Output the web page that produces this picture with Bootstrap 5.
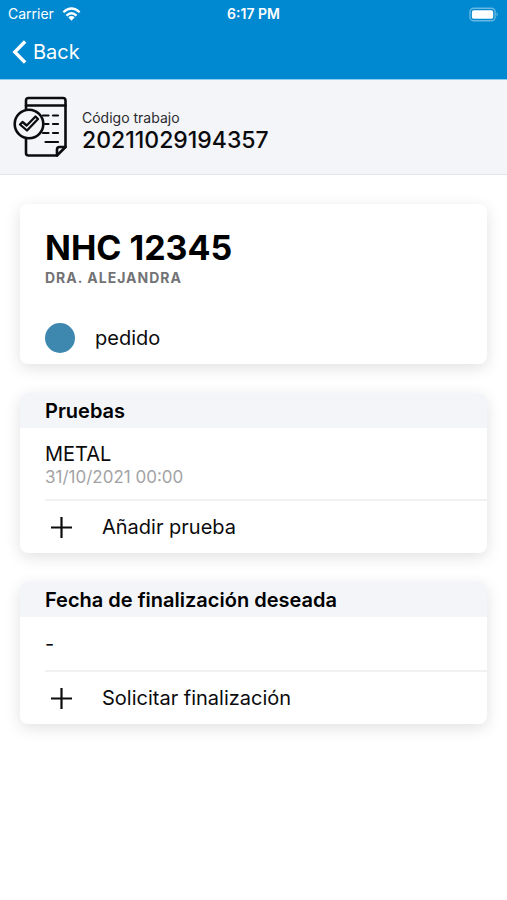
<!DOCTYPE html>
<html lang="es">
<head>
<meta charset="utf-8">
<meta name="viewport" content="width=device-width, initial-scale=1">
<title>Código trabajo 20211029194357</title>
<link href="https://cdn.jsdelivr.net/npm/bootstrap@5.3.0/dist/css/bootstrap.min.css" rel="stylesheet">
<style>
  body { font-family: Inter, "Liberation Sans", sans-serif; font-size: 20px; line-height: 24px; color: #0b0b0d; background: #fff; }
  .app-header { background: #0089d0; border-bottom: 1px solid #8fcdee; }
  .status-bar { height: 28px; padding: 0 8px; font-size: 14px; line-height: 28px; }
  .back-bar { height: 51px; padding: 0 12px; }
  .back-link { gap: 6px; line-height: 48px; }
  .job-summary { background: #f3f5f9; border-bottom: 1px solid #e2e4e7; height: 95px; padding: 0 12px; gap: 14px; }
  .job-text { padding-top: 8px; }
  .job-label { font-size: 14px; line-height: 18px; color: #2b2b2e; }
  .job-code { font-size: 23px; line-height: 26px; }
  .panels { padding: 29px 20px; gap: 29px; }
  .panel { border: 0; border-radius: 8px; color: inherit; box-shadow: 0 4px 16px rgba(0, 0, 0, .12); overflow: hidden; }
  .patient { padding: 24px 25px 10px; }
  .patient h1 { font-size: 34px; line-height: 40px; color: #000; }
  .doctor { font-size: 14px; line-height: 20px; letter-spacing: 1px; color: #727275; }
  .state-row { margin-top: 34px; gap: 20px; height: 32px; }
  .state-dot { width: 30px; height: 30px; background: #3e88b0; }
  .panel-title { font-size: 20px; line-height: 33px; padding: 2px 25px 0; background: #f3f5f9; color: #000; }
  .panel-row { margin-left: 25px; min-height: 53px; }
  .panel-row + .panel-row { border-top: 2px solid #f1f1f2; }
  .test-row { min-height: 71px; padding: 4px 0 2px; }
  .test-date { font-size: 17px; line-height: 22px; color: #a3a3a5; }
  .action { gap: 29px; padding: 0 0 0 5px; border: 0; background: none; color: inherit; min-height: 52px; text-align: left; }
</style>
</head>
<body>
<header class="app-header text-white">
  <div class="status-bar row g-0">
    <div class="col d-flex align-items-center gap-2">
      <span>Carrier</span>
      <svg width="19" height="15" viewBox="0 0 20 15" fill="none" stroke="#fff" stroke-width="2.4" aria-hidden="true">
        <path d="M1.4 5.1Q10-2.7 18.6 5.1M4.7 8.6Q10 3.8 15.3 8.6"/>
        <path d="M6.6 10.5Q10 7.8 13.4 10.5L10 14Z" fill="#fff" stroke="none"/>
      </svg>
    </div>
    <div class="col-auto fw-semibold">6:17 PM</div>
    <div class="col d-flex align-items-center justify-content-end">
      <svg width="30" height="15" viewBox="0 0 31 15" aria-hidden="true">
        <rect x="1" y="1" width="26" height="13" rx="4" fill="none" stroke="#69b8e2" stroke-width="1.4"/>
        <rect x="3" y="3" width="22" height="9" rx="2" fill="#fff"/>
        <path d="M28.5 5.2Q31 7.5 28.5 9.8Z" fill="#69b8e2"/>
      </svg>
    </div>
  </div>
  <nav class="back-bar">
    <a href="#" class="back-link d-inline-flex align-items-center text-white text-decoration-none">
      <svg width="15" height="26" viewBox="0 0 16 26" fill="none" stroke="#fff" stroke-width="3.6" aria-hidden="true"><path d="M14 1.8L3 13L14 24.2"/></svg>
      <span>Back</span>
    </a>
  </nav>
</header>

<section class="job-summary d-flex align-items-center">
  <svg width="56" height="62" viewBox="0 0 56 62" fill="none" stroke="#0c0c0e" stroke-width="2.6" stroke-linecap="round" stroke-linejoin="round" aria-hidden="true">
    <path d="M14 13V4.500Q14 2 16.500 2H51Q53.500 2 53.500 4.500V51L45 59.500H16.500Q14 59.500 14 57V42"/>
    <path d="M14 9.500H53.500M45 59.500V53.500Q45 51 47.500 51H53.500"/>
    <circle cx="17" cy="28" r="14.300"/>
    <path d="M8 28.500L10.500 26L14.700 29.500L23.500 20.500L26 23L15 34.500Z" stroke-width="2.300"/>
    <path d="M31 19.500H36.500M41 19.500H46M33 28H36.500M41 28H46M31 37H36.500M41 37H46M33.500 46H46" stroke-width="2.200"/>
  </svg>
  <div class="job-text">
    <div class="job-label">Código trabajo</div>
    <div class="job-code fw-medium">20211029194357</div>
  </div>
</section>

<main class="panels d-flex flex-column">
  <section class="card panel patient">
    <h1 class="fw-bold m-0">NHC 12345</h1>
    <div class="doctor fw-bold text-uppercase">Dra. Alejandra</div>
    <div class="state-row d-flex align-items-center">
      <span class="state-dot rounded-circle"></span>
      <span>pedido</span>
    </div>
  </section>

  <section class="card panel">
    <h2 class="panel-title fw-semibold m-0">Pruebas</h2>
    <div class="panel-row test-row d-flex flex-column justify-content-center">
      <div>METAL</div>
      <div class="test-date">31/10/2021 00:00</div>
    </div>
    <div class="panel-row">
      <button type="button" class="action w-100 d-flex align-items-center">
        <svg width="23" height="23" viewBox="0 0 23 23" stroke="#0c0c0e" stroke-width="2.200" aria-hidden="true"><path d="M11.500 1V22M1 11.500H22"/></svg>
        <span>Añadir prueba</span>
      </button>
    </div>
  </section>

  <section class="card panel">
    <h2 class="panel-title fw-semibold m-0">Fecha de finalización deseada</h2>
    <div class="panel-row d-flex align-items-center">-</div>
    <div class="panel-row">
      <button type="button" class="action w-100 d-flex align-items-center">
        <svg width="23" height="23" viewBox="0 0 23 23" stroke="#0c0c0e" stroke-width="2.200" aria-hidden="true"><path d="M11.500 1V22M1 11.500H22"/></svg>
        <span>Solicitar finalización</span>
      </button>
    </div>
  </section>
</main>
<script src="https://cdn.jsdelivr.net/npm/bootstrap@5.3.0/dist/js/bootstrap.bundle.min.js"></script>
</body>
</html>
